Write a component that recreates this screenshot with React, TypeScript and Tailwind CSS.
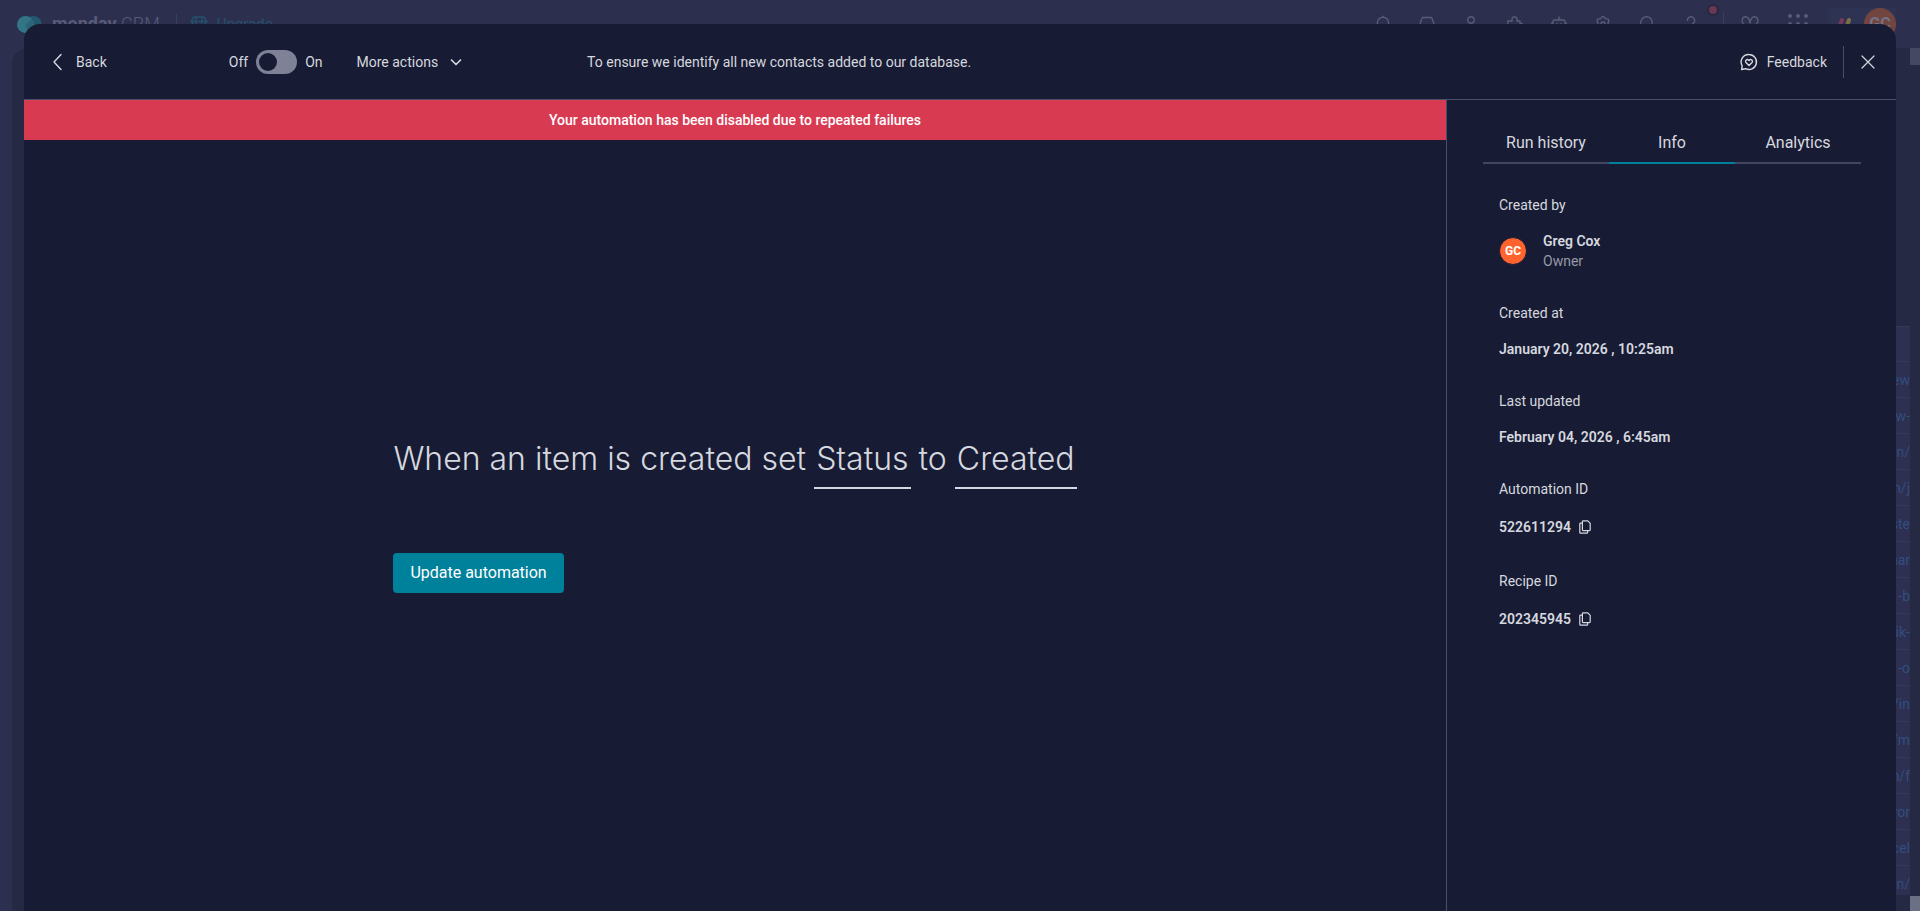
import { useState } from "react";
import type { ReactNode } from "react";

const linkCells = ["ew", "w-", "n/", "n/j", "ste", "nar", "-b", "iik-", "-o", "/in", "/m", "n/f", "ror", "cel", "n/"];

function Line({ children, size = 20 }: { children: ReactNode; size?: number }) {
  return (
    <svg width={size} height={size} viewBox="0 0 20 20" fill="none" stroke="currentColor" strokeWidth="1.4" strokeLinecap="round" strokeLinejoin="round" aria-hidden="true">
      {children}
    </svg>
  );
}

const topBarIcons: { name: string; art: ReactNode }[] = [
  { name: "Notifications", art: <path d="M10 2.2v1M4.4 14V8.8a5.6 5.6 0 0 1 11.2 0V14H4.4ZM8.5 17h3" /> },
  { name: "Inbox", art: <path d="M2.6 11 5 4.2a1 1 0 0 1 1-.7h8a1 1 0 0 1 1 .7l2.4 6.8v5.5H2.6V11Z" /> },
  { name: "Invite members", art: <><circle cx="10" cy="6" r="3.2" /><path d="M4 17c0-3.5 2.5-5.500 6-5.500s6 2 6 5.500" /></> },
  { name: "Apps", art: <path d="M2.8 17V7h4.400c-.8-2 .2-4.300 2.300-4.300s3.100 2.300 2.300 4.300H15v2.500h2.200v4H15V17H2.800Z" /> },
  { name: "Assistant", art: <path d="M10 3v3M5.500 6h9a1.500 1.500 0 0 1 1.500 1.500V15H4V7.500A1.500 1.500 0 0 1 5.500 6ZM4 9.300H2.500M16 9.300h1.500M8 9.500v1M12 9.500v1" /> },
  { name: "Settings", art: <><path d="M8.300 3.800c.7-1.700 2.700-1.700 3.400 0 .4.900 1 1.200 2 1.100 1.900-.3 2.900 1.500 1.700 3-.6.800-.6 1.400 0 2.200 1.200 1.500.2 3.300-1.700 3-1-.1-1.600.2-2 1.100-.7 1.700-2.700 1.700-3.400 0-.4-.9-1-1.200-2-1.100-1.900.3-2.900-1.500-1.700-3 .6-.8.6-1.400 0-2.200-1.200-1.500-.2-3.300 1.700-3 1 .1 1.600-.2 2-1.100Z" /><circle cx="10" cy="10" r="2" /></> },
  { name: "Search", art: <><circle cx="9.500" cy="8.500" r="5.800" /><path d="m14 13 3.500 4" /></> },
  { name: "Help", art: <path d="M6.300 6.500a3.700 3.700 0 1 1 6 2.900c-1.500 1-2.300 1.600-2.300 3.300M10 16.200v.4" /> },
];

function CopyIcon() {
  return (
    <svg width="12" height="14" viewBox="0 0 12 14" fill="none" stroke="currentColor" strokeWidth="1.200" strokeLinejoin="round" strokeLinecap="round" aria-hidden="true">
      <path d="M4.200.8h4.600l2.400 2.600v6.400a.8.8 0 0 1-.8.8H4.200a.8.8 0 0 1-.8-.8V1.600a.8.8 0 0 1 .8-.8Z" />
      <path d="M3.200 3.200H1.600a.8.8 0 0 0-.8.8v8.400a.8.8 0 0 0 .8.8h6.200a.8.8 0 0 0 .8-.8v-1.600" />
    </svg>
  );
}

function TopBar() {
  return (
    <header className="flex h-12 shrink-0 items-center bg-[#2c2f4e] pl-4 pr-6 text-[#595c77]">
      <svg width="28" height="20" viewBox="0 0 28 20" aria-hidden="true">
        <circle cx="17.500" cy="10" r="8" fill="#22596f" />
        <circle cx="9.500" cy="10.500" r="8.500" fill="#337487" />
        <path d="M9.500 10.500 16 5a8.500 8.500 0 0 1-4 13.500Z" fill="#2a6579" />
      </svg>
      <span className="ml-2 text-lg leading-6">
        <b className="font-bold">monday</b> <span className="font-light">CRM</span>
      </span>
      <span className="ml-4 h-5 w-px bg-[#3b3e5b]" />
      <a href="#upgrade" className="ml-3 flex items-center gap-2 text-[15px] text-[#25506d]">
        <Line>
          <path d="M5 3h10l3 4.500-8 9-8-9L5 3ZM2 7.500h16M7.500 3 6.500 7.500l3.500 9 3.500-9L12.500 3" />
        </Line>
        Upgrade
      </a>
      <nav className="ml-auto flex items-center">
        {topBarIcons.map((icon) => (
          <button key={icon.name} type="button" aria-label={icon.name} className="relative flex h-12 w-11 items-center justify-center">
            <Line>{icon.art}</Line>
            {icon.name === "Help" && <span className="absolute -right-1.5 top-1 size-3 rounded-full border-2 border-[#252843] bg-[#6b3853]" />}
          </button>
        ))}
        <span className="ml-2.5 mr-1 h-6 w-px bg-[#3b3e5b]" />
        <button type="button" aria-label="Favorites" className="flex h-12 w-11 items-center justify-center">
          <Line>
            <path d="M10 17 3.600 10.200C.6 7 2.300 2.800 5.600 2.800c3.400 0 4.400 4.700 4.400 6.200 0-1.500 1-6.200 4.400-6.200 3.300 0 5 4.200 2 7.400L10 17Z" />
          </Line>
        </button>
        <button type="button" aria-label="Products" className="ml-1 mr-2 flex h-12 w-11 items-center justify-center">
          <svg width="20" height="20" viewBox="0 0 20 20" fill="currentColor" aria-hidden="true">
            {[2, 10, 18].map((y) => [2, 10, 18].map((x) => <circle key={`${x}-${y}`} cx={x} cy={y} r="2" />))}
          </svg>
        </button>
        <span className="flex h-8 items-center justify-end gap-3 rounded-l bg-[#2f3353] pl-2">
          <svg width="16" height="12" viewBox="0 0 16 12" strokeWidth="4" strokeLinecap="round" aria-hidden="true">
            <path d="M3 10 6 2" stroke="#7b3a5c" />
            <path d="M10 10l3-8" stroke="#7d6f45" />
          </svg>
          <span className="flex size-8 items-center justify-center rounded-full bg-[#72453f] text-base font-bold text-[#75738b]">GC</span>
        </span>
      </nav>
    </header>
  );
}

function PageBehind() {
  return (
    <div className="flex h-full flex-col bg-[#2c2f4e]" aria-hidden="true">
      <TopBar />
      <div className="ml-3 flex min-h-0 grow items-stretch justify-end rounded-tl-2xl bg-[#262944]">
        <div className="flex w-3.5 flex-col pb-4 pt-[278px]">
          <div className="flex min-h-0 flex-col overflow-hidden border-t border-[#343755] bg-[#2d3050]">
            <div className="h-[34px] shrink-0" />
            {linkCells.map((text, i) => (
              <div key={i} className="flex h-9 shrink-0 items-center justify-end border-t border-[#363955] text-sm text-[#324e80]">
                {text}
              </div>
            ))}
          </div>
        </div>
        <div className="flex w-2.5 flex-col justify-between">
          <div className="h-[17px] bg-[#454863]" />
          <div className="h-[15px] bg-[#6c7084]" />
        </div>
      </div>
    </div>
  );
}

function DialogHeader() {
  const [on, setOn] = useState(false);
  return (
    <header className="flex h-19 shrink-0 items-center border-b border-[#4b4e69] pl-6 pr-[18px] text-sm">
      <button type="button" className="flex items-center gap-2">
        <Line>
          <path d="m13 2.500-7 7.500 7 7.500" />
        </Line>
        Back
      </button>
      <div className="ml-[122px] flex items-center gap-2">
        <label htmlFor="automation-enabled">Off</label>
        <input
          id="automation-enabled"
          type="checkbox"
          role="switch"
          checked={on}
          onChange={(e) => setOn(e.target.checked)}
          className="flex h-6 w-[41px] appearance-none items-center rounded-full bg-[#7f8296] px-[3px] before:size-[18px] before:rounded-full before:bg-[#181b34] checked:justify-end checked:bg-[#00819b]"
        />
        <label htmlFor="automation-enabled">On</label>
      </div>
      <button type="button" className="ml-[34px] flex items-center gap-2">
        More actions
        <Line>
          <path d="m5.500 8 4.500 4.500L14.500 8" strokeWidth="1.700" />
        </Line>
      </button>
      <p className="ml-[121px]">To ensure we identify all new contacts added to our database.</p>
      <button type="button" className="ml-auto flex items-center gap-2">
        <Line>
          <path d="M10 2.500a7.500 7.500 0 1 1-3.400 14.200L2.600 17.500l.6-3.700A7.500 7.500 0 0 1 10 2.500Z" />
          <path d="m10 13.600-3-3.100c-1.500-1.700 1-4.200 3-1.900 2-2.300 4.500.2 3 1.900l-3 3.100Z" />
        </Line>
        Feedback
      </button>
      <span className="ml-4 h-8 w-px bg-[#4b4e69]" />
      <button type="button" aria-label="Close" className="ml-3.5">
        <Line>
          <path d="m4 4 12 12M16 4 4 16" strokeWidth="1.200" />
        </Line>
      </button>
    </header>
  );
}

function Field({ label, children }: { label: string; children: ReactNode }) {
  return (
    <div className="flex flex-col gap-4">
      <dt>{label}</dt>
      <dd>{children}</dd>
    </div>
  );
}

function CopyValue({ value }: { value: string }) {
  return (
    <span className="flex h-6 items-center gap-2 font-semibold">
      {value}
      <button type="button" aria-label={`Copy ${value}`} onClick={() => navigator.clipboard?.writeText(value)}>
        <CopyIcon />
      </button>
    </span>
  );
}

function SidePanel() {
  const tabs = ["Run history", "Info", "Analytics"];
  const [active, setActive] = useState("Info");
  return (
    <aside className="w-[450px] shrink-0 border-l border-[#4b4e69] pl-9 pr-[35px] pt-6 text-sm">
      <div role="tablist" className="grid grid-cols-3">
        {tabs.map((tab) => (
          <button
            key={tab}
            type="button"
            role="tab"
            aria-selected={tab === active}
            onClick={() => setActive(tab)}
            className={`h-10 border-b-2 text-base ${tab === active ? "border-[#00819b]" : "border-[#434660]"}`}
          >
            {tab}
          </button>
        ))}
      </div>
      <dl className="flex flex-col gap-8 px-4 pt-[31px]">
        <Field label="Created by">
          <span className="flex items-center gap-4">
            <span className="flex size-7 items-center justify-center rounded-full border border-[#181b34] bg-[#ff642e] text-xs font-bold text-white">GC</span>
            <span className="flex flex-col">
              <span className="font-semibold">Greg Cox</span>
              <span className="text-[#9699a6]">Owner</span>
            </span>
          </span>
        </Field>
        <Field label="Created at">
          <span className="font-semibold">January 20, 2026 , 10:25am</span>
        </Field>
        <Field label="Last updated">
          <span className="font-semibold">February 04, 2026 , 6:45am</span>
        </Field>
        <Field label="Automation ID">
          <CopyValue value="522611294" />
        </Field>
        <Field label="Recipe ID">
          <CopyValue value="202345945" />
        </Field>
      </dl>
    </aside>
  );
}

export default function App() {
  return (
    <div className="relative h-screen overflow-hidden font-['Roboto',sans-serif]">
      <PageBehind />
      <section role="dialog" aria-label="Automation" className="absolute inset-x-6 bottom-0 top-6 flex flex-col overflow-hidden rounded-t-2xl bg-[#181b34] text-[#d5d8df]">
        <DialogHeader />
        <div className="flex min-h-0 grow">
          <main className="flex min-w-0 grow flex-col">
            <p role="alert" className="flex h-10 shrink-0 items-center justify-center bg-[#d83a52] text-sm font-medium text-white">
              Your automation has been disabled due to repeated failures
            </p>
            <div className="flex grow flex-col items-center justify-center">
              <div className="flex flex-col items-start gap-16 pb-5">
                <h1 className="flex items-start gap-2 font-['Inter',sans-serif] text-[32px] font-light leading-10">
                  <span>When an item is created set</span>
                  <button type="button" className="border-b-2 border-current px-0.5 pb-2">
                    Status
                  </button>
                  <span>to</span>
                  <button type="button" className="border-b-2 border-current px-0.5 pb-2">
                    Created
                  </button>
                </h1>
                <button type="button" className="h-10 rounded bg-[#00819b] px-[17px] text-base text-white">
                  Update automation
                </button>
              </div>
            </div>
          </main>
          <SidePanel />
        </div>
      </section>
    </div>
  );
}
